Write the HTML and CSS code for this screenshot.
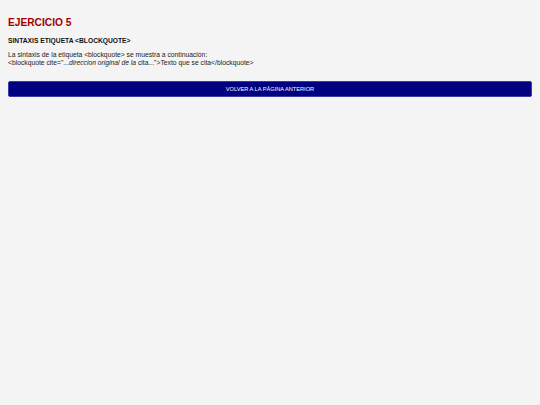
FILE: index.html
```html
<!DOCTYPE html>
<html lang="es">
<head>
<meta charset="utf-8">
<title>Ejercicio 5</title>
<link rel="stylesheet" href="styles.css">
</head>
<body>
<main class="page">
  <h1 class="title">EJERCICIO 5</h1>
  <h2 class="subtitle">SINTAXIS ETIQUETA &lt;BLOCKQUOTE&gt;</h2>
  <p class="text">La sintaxis de la etiqueta &lt;blockquote&gt; se muestra a continuación:<br>&lt;blockquote cite="...<em>direccion original de la</em> cita..."&gt;Texto que se cita&lt;/blockquote&gt;</p>
  <a class="back" href="#">VOLVER A LA PÁGINA ANTERIOR</a>
</main>
</body>
</html>
```
FILE: styles.css
```css
html, body {
  margin: 0;
  padding: 0;
  background: #f4f4f4;
}
body {
  font-family: "Liberation Sans", Arial, sans-serif;
  color: #111;
}
.page {
  padding: 17px 8px 8px 8px;
  display: flex;
  flex-direction: column;
}
.title {
  margin: 0;
  font-size: 10.2px;
  line-height: 12px;
  font-weight: bold;
  color: #a00000;
}
.subtitle {
  margin: 8px 0 0 0;
  font-size: 6.7px;
  line-height: 8px;
  font-weight: bold;
  color: #111;
}
.text {
  margin: 6px 0 0 0;
  font-size: 6.75px;
  line-height: 7.5px;
  color: #222;
}
.back {
  margin-top: 15px;
  display: block;
  background: #000080;
  border: 1px solid #3a3aa8;
  border-radius: 2px;
  color: #fff;
  text-decoration: none;
  text-align: center;
  font-size: 5.65px;
  line-height: 14px;
}
```
